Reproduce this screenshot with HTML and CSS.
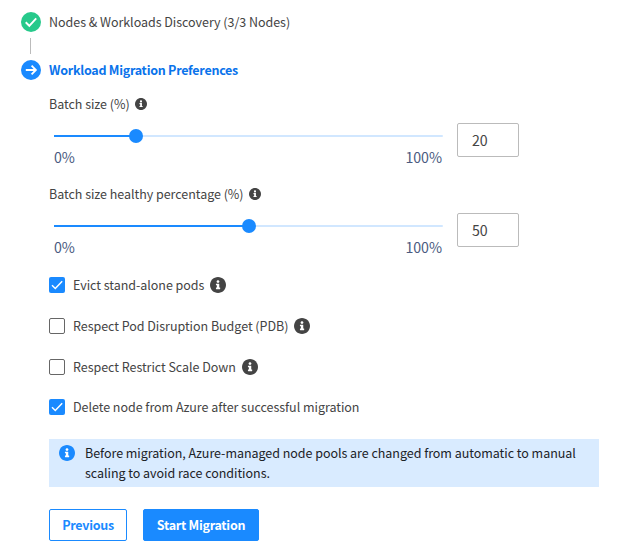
FILE: index.html
```html
<!DOCTYPE html>
<html lang="en">
<head>
<meta charset="utf-8">
<title>Workload Migration</title>
<link rel="stylesheet" href="styles.css">
</head>
<body>
<svg width="0" height="0" class="defs">
  <symbol id="info" viewBox="0 0 512 512">
    <path fill="currentColor" d="M256 0C115 0 0 115 0 256s115 256 256 256 256-115 256-256S397 0 256 0z"/>
    <path fill="#fff" d="M256 100c25 0 45 20 45 44s-20 44-45 44-45-20-45-44 20-44 45-44zM326 376c0 6.600-5.400 12-12 12H202c-6.600 0-12-5.400-12-12v-28c0-6.600 5.400-12 12-12h18v-70h-18c-6.600 0-12-5.400-12-12v-28c0-6.600 5.400-12 12-12h82c6.600 0 12 5.400 12 12v110h18c6.600 0 12 5.400 12 12z"/>
  </symbol>
</svg>
<main class="wizard">
  <div class="step">
    <svg class="step-icon done" viewBox="0 0 20 20"><circle cx="10" cy="10" r="10" fill="currentColor"/><path d="M4.700 10.300 8.300 13.800 15.200 6.300" fill="none" stroke="#fff" stroke-width="1.900"/></svg>
    <span class="step-title">Nodes &amp; Workloads Discovery (3/3 Nodes)</span>
  </div>
  <div class="connector"></div>
  <div class="step">
    <svg class="step-icon current" viewBox="0 0 20 20"><circle cx="10" cy="10" r="10" fill="currentColor"/><path d="M4.800 10H15M10.600 5.700 14.900 10 10.600 14.300" fill="none" stroke="#fff" stroke-width="1.800"/></svg>
    <span class="step-title active">Workload Migration Preferences</span>
  </div>

  <section class="content">
    <div class="field">
      <div class="label"><span>Batch size (%)</span><svg class="info-sm"><use href="#info"/></svg></div>
      <div class="control">
        <div class="slider">
          <div class="track"><div class="fill" style="width:21.100%"></div><div class="thumb"></div></div>
          <div class="scale"><span>0%</span><span>100%</span></div>
        </div>
        <div class="number">20</div>
      </div>
    </div>
    <div class="field">
      <div class="label"><span>Batch size healthy percentage (%)</span><svg class="info-sm"><use href="#info"/></svg></div>
      <div class="control">
        <div class="slider">
          <div class="track"><div class="fill" style="width:50%"></div><div class="thumb"></div></div>
          <div class="scale"><span>0%</span><span>100%</span></div>
        </div>
        <div class="number">50</div>
      </div>
    </div>

    <div class="checks">
      <div class="check"><span class="box checked"><svg viewBox="0 0 16 16"><path d="M3 8.300 6.300 11.500 13.200 4.300"/></svg></span><span>Evict stand-alone pods</span><svg class="info"><use href="#info"/></svg></div>
      <div class="check"><span class="box"></span><span>Respect Pod Disruption Budget (PDB)</span><svg class="info"><use href="#info"/></svg></div>
      <div class="check"><span class="box"></span><span>Respect Restrict Scale Down</span><svg class="info"><use href="#info"/></svg></div>
      <div class="check"><span class="box checked"><svg viewBox="0 0 16 16"><path d="M3 8.300 6.300 11.500 13.200 4.300"/></svg></span><span>Delete node from Azure after successful migration</span></div>
    </div>

    <div class="notice">
      <svg class="info"><use href="#info"/></svg>
      <p>Before migration, Azure-managed node pools are changed from automatic to manual<br>scaling to avoid race conditions.</p>
    </div>

    <div class="actions">
      <button class="btn outline">Previous</button>
      <button class="btn primary">Start Migration</button>
    </div>
  </section>
</main>
</body>
</html>
```
FILE: styles.css
```css
* { box-sizing: border-box; }
body {
  margin: 0;
  background: #fff;
  color: #444;
  font: 12.500px/20px "Noto Sans CJK JP", "Noto Sans", sans-serif;
  letter-spacing: -0.035px;
}
.defs { display: block; }
.wizard { padding: 12px 22px 0 21px; }
.step { display: flex; gap: 8px; height: 20px; white-space: nowrap; }
.step-icon { width: 20px; height: 20px; flex: none; }
.done { color: #27c98b; }
.current { color: #1a8aff; }
.active { color: #0a73eb; font-weight: 700; letter-spacing: -0.260px; }
.connector { width: 1px; height: 16px; margin: 6px 0 6px 9px; background: #bbb; }
.content { padding: 14px 0 0 28px; }
.field { height: 90px; }
.label { display: flex; align-items: center; height: 20px; gap: 5px; white-space: nowrap; }
.info-sm { width: 12px; height: 12px; color: #444; }
.control { display: flex; gap: 14px; padding: 9px 0 0 5px; }
.slider { width: 389px; padding-top: 12px; }
.track { display: flex; align-items: center; height: 2px; background: #d1e7ff; border-radius: 1px; }
.fill { height: 2px; background: #1a8aff; }
.thumb { width: 14px; height: 14px; flex: none; margin-left: -7px; border-radius: 50%; background: #1a8aff; }
.scale { display: flex; justify-content: space-between; margin-top: 10px; padding-right: 1px; color: #4a5a80; font-size: 14.200px; }
.number { width: 62px; height: 34px; border: 1px solid #bbb; border-radius: 2px; padding: 0 14px; font-size: 14.200px; line-height: 33px; }
.checks { display: flex; flex-direction: column; gap: 21px; padding-top: 1px; }
.check { display: flex; align-items: center; height: 20px; white-space: nowrap; }
.check:last-child { margin-top: -1px; }
.box { width: 16px; height: 16px; margin-right: 8px; border: 1px solid #666; border-radius: 2px; }
.checked { border: 0; background: #1a8aff; }
.box svg { display: block; width: 16px; height: 16px; fill: none; stroke: #fff; stroke-width: 1.500; }
.info { width: 16px; height: 16px; flex: none; margin-left: 6px; color: #444; }
.notice { display: flex; gap: 10px; width: 550px; height: 48px; margin-top: 22px; padding: 4px 10px; background: #d9ebff; color: #1c2227; white-space: nowrap; }
.notice .info { margin: 2px 0 0; color: #1a8aff; }
.notice p { margin: 0; }
.actions { display: flex; gap: 16px; margin-top: 22px; }
.btn { height: 32px; padding: 0; border: 1px solid #1a8aff; border-radius: 2px; font: 700 12.500px/30px "Noto Sans CJK JP", "Noto Sans", sans-serif; letter-spacing: -0.260px; white-space: nowrap; }
.outline { width: 78px; background: #fff; color: #1a8aff; }
.primary { width: 116px; background: #1a8aff; color: #fff; }
```
